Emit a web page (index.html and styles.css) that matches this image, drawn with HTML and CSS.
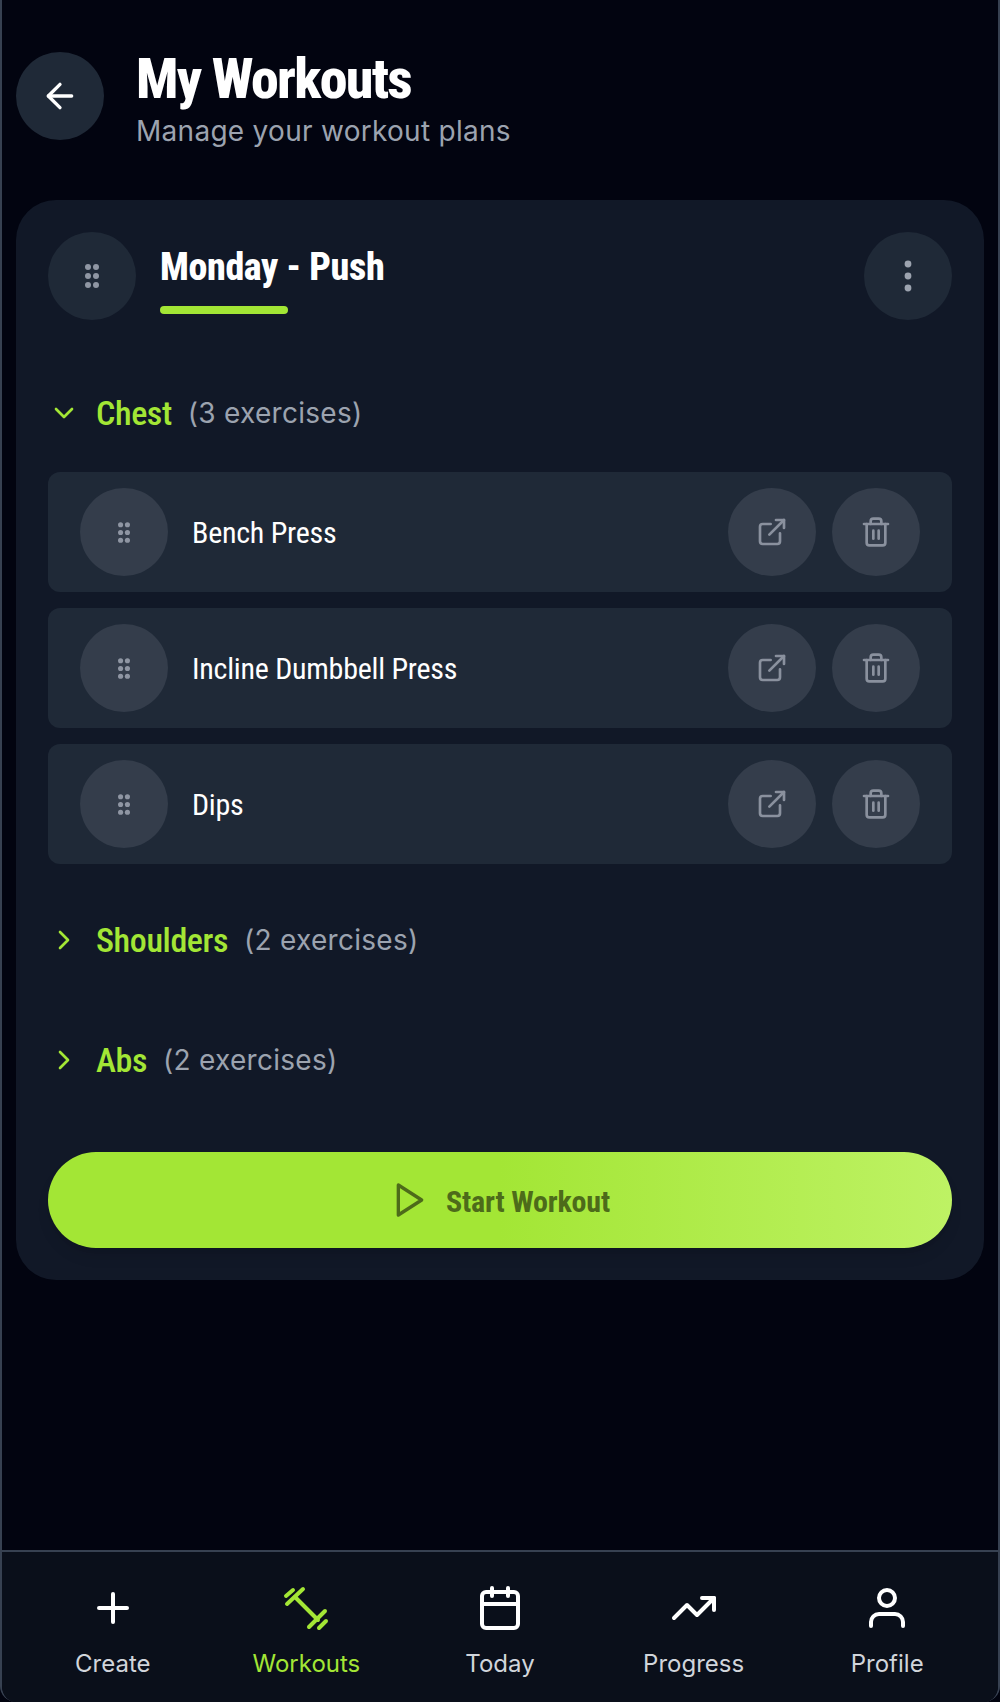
FILE: index.html
```html
<!DOCTYPE html>
<html lang="en">
<head>
  <meta charset="UTF-8">
  <meta name="viewport" content="width=device-width, initial-scale=1.0">
  <title>My Workouts</title>
  <link rel="stylesheet" href="styles.css">
</head>
<body>
  <div class="phone">
    <main class="content">
      <header class="page-head">
        <button class="circle circle-dark back-btn">
          <svg class="icon icon-lg" viewBox="0 0 24 24"><path d="M19 12H5"/><path d="m12 19-7-7 7-7"/></svg>
        </button>
        <div class="page-title">
          <h1>My Workouts</h1>
          <p class="subtitle">Manage your workout plans</p>
        </div>
      </header>

      <section class="card">
        <div class="card-head">
          <div class="circle circle-dark">
            <svg class="grip" viewBox="0 0 14 24"><circle cx="3" cy="3" r="3"/><circle cx="11" cy="3" r="3"/><circle cx="3" cy="12" r="3"/><circle cx="11" cy="12" r="3"/><circle cx="3" cy="21" r="3"/><circle cx="11" cy="21" r="3"/></svg>
          </div>
          <div class="plan-title">
            <h2>Monday - Push</h2>
            <div class="underline"></div>
          </div>
          <button class="circle circle-dark">
            <svg class="dots" viewBox="0 0 8 32"><circle cx="4" cy="4" r="3.4"/><circle cx="4" cy="16" r="3.4"/><circle cx="4" cy="28" r="3.4"/></svg>
          </button>
        </div>

        <div class="group group-open">
          <svg class="chevron" viewBox="0 0 24 24"><path d="m6 9 6 6 6-6"/></svg>
          <span class="group-name">Chest</span>
          <span class="group-count">(3 exercises)</span>
        </div>

        <div class="exercise-list">
          <div class="exercise">
            <div class="circle circle-light">
              <svg class="grip grip-sm" viewBox="0 0 14 24"><circle cx="3" cy="3" r="3"/><circle cx="11" cy="3" r="3"/><circle cx="3" cy="12" r="3"/><circle cx="11" cy="12" r="3"/><circle cx="3" cy="21" r="3"/><circle cx="11" cy="21" r="3"/></svg>
            </div>
            <span class="exercise-name">Bench Press</span>
            <button class="circle circle-light">
              <svg class="icon icon-muted" viewBox="0 0 24 24"><path d="M15 3h6v6"/><path d="M10 14 21 3"/><path d="M18 13v6a2 2 0 0 1-2 2H5a2 2 0 0 1-2-2V8a2 2 0 0 1 2-2h6"/></svg>
            </button>
            <button class="circle circle-light">
              <svg class="icon icon-muted" viewBox="0 0 24 24"><path d="M3 6h18"/><path d="M19 6v14a2 2 0 0 1-2 2H7a2 2 0 0 1-2-2V6"/><path d="M8 6V4a2 2 0 0 1 2-2h4a2 2 0 0 1 2 2v2"/><path d="M10 11v6"/><path d="M14 11v6"/></svg>
            </button>
          </div>
          <div class="exercise">
            <div class="circle circle-light">
              <svg class="grip grip-sm" viewBox="0 0 14 24"><circle cx="3" cy="3" r="3"/><circle cx="11" cy="3" r="3"/><circle cx="3" cy="12" r="3"/><circle cx="11" cy="12" r="3"/><circle cx="3" cy="21" r="3"/><circle cx="11" cy="21" r="3"/></svg>
            </div>
            <span class="exercise-name">Incline Dumbbell Press</span>
            <button class="circle circle-light">
              <svg class="icon icon-muted" viewBox="0 0 24 24"><path d="M15 3h6v6"/><path d="M10 14 21 3"/><path d="M18 13v6a2 2 0 0 1-2 2H5a2 2 0 0 1-2-2V8a2 2 0 0 1 2-2h6"/></svg>
            </button>
            <button class="circle circle-light">
              <svg class="icon icon-muted" viewBox="0 0 24 24"><path d="M3 6h18"/><path d="M19 6v14a2 2 0 0 1-2 2H7a2 2 0 0 1-2-2V6"/><path d="M8 6V4a2 2 0 0 1 2-2h4a2 2 0 0 1 2 2v2"/><path d="M10 11v6"/><path d="M14 11v6"/></svg>
            </button>
          </div>
          <div class="exercise">
            <div class="circle circle-light">
              <svg class="grip grip-sm" viewBox="0 0 14 24"><circle cx="3" cy="3" r="3"/><circle cx="11" cy="3" r="3"/><circle cx="3" cy="12" r="3"/><circle cx="11" cy="12" r="3"/><circle cx="3" cy="21" r="3"/><circle cx="11" cy="21" r="3"/></svg>
            </div>
            <span class="exercise-name">Dips</span>
            <button class="circle circle-light">
              <svg class="icon icon-muted" viewBox="0 0 24 24"><path d="M15 3h6v6"/><path d="M10 14 21 3"/><path d="M18 13v6a2 2 0 0 1-2 2H5a2 2 0 0 1-2-2V8a2 2 0 0 1 2-2h6"/></svg>
            </button>
            <button class="circle circle-light">
              <svg class="icon icon-muted" viewBox="0 0 24 24"><path d="M3 6h18"/><path d="M19 6v14a2 2 0 0 1-2 2H7a2 2 0 0 1-2-2V6"/><path d="M8 6V4a2 2 0 0 1 2-2h4a2 2 0 0 1 2 2v2"/><path d="M10 11v6"/><path d="M14 11v6"/></svg>
            </button>
          </div>
        </div>

        <div class="group">
          <svg class="chevron" viewBox="0 0 24 24"><path d="m9 18 6-6-6-6"/></svg>
          <span class="group-name">Shoulders</span>
          <span class="group-count">(2 exercises)</span>
        </div>
        <div class="group">
          <svg class="chevron" viewBox="0 0 24 24"><path d="m9 18 6-6-6-6"/></svg>
          <span class="group-name">Abs</span>
          <span class="group-count">(2 exercises)</span>
        </div>

        <button class="start-btn">
          <svg class="play" viewBox="0 0 24 24"><path d="M5 3 19 12 5 21Z"/></svg>
          <span class="start-label">Start Workout</span>
        </button>
      </section>
    </main>

    <nav class="bottom-nav">
      <div class="nav-item">
        <svg class="icon nav-icon" viewBox="0 0 24 24"><path d="M5 12h14"/><path d="M12 5v14"/></svg>
        <span>Create</span>
      </div>
      <div class="nav-item nav-active">
        <svg class="icon nav-icon" viewBox="0 0 24 24"><path d="M2 6 5.5 3"/><path d="M2.5 10 10.5 2.5"/><path d="M6.5 6.5 18 18"/><path d="M13.5 21.5 21.5 13.5"/><path d="M18.5 22 22 18.5"/></svg>
        <span>Workouts</span>
      </div>
      <div class="nav-item">
        <svg class="icon nav-icon" viewBox="0 0 24 24"><path d="M8 2v4"/><path d="M16 2v4"/><rect x="3" y="4" width="18" height="18" rx="2"/><path d="M3 10h18"/></svg>
        <span>Today</span>
      </div>
      <div class="nav-item">
        <svg class="icon nav-icon" viewBox="0 0 24 24"><path d="m22 7-8.5 8.5-5-5L2 17"/><path d="M16 7h6v6"/></svg>
        <span>Progress</span>
      </div>
      <div class="nav-item">
        <svg class="icon nav-icon" viewBox="0 0 24 24"><circle cx="12" cy="7" r="4"/><path d="M4 21v-2a4 4 0 0 1 4-4h8a4 4 0 0 1 4 4v2"/></svg>
        <span>Profile</span>
      </div>
    </nav>
  </div>
</body>
</html>
```

FILE: styles.css
```css
* {
  box-sizing: border-box;
}
body {
  margin: 0;
  background-color: #020410;
  font-family: Inter, "Noto Sans", sans-serif;
  color: #fff;
}
button {
  border: none;
  padding: 0;
  font: inherit;
}
h1, h2, p {
  margin: 0;
}
.phone {
  height: 1702px;
  display: flex;
  flex-direction: column;
  border: 2px solid #374151;
  border-top: none;
  border-bottom: none;
  border-radius: 0 0 16px 16px;
  overflow: hidden;
}
.content {
  flex: 1;
  padding: 48px 14px 0;
}
.page-head {
  display: flex;
  align-items: flex-start;
  gap: 32px;
  margin-bottom: 51px;
}
.page-title {
  padding-top: 3px;
}
h1 {
  font-family: Roboto, sans-serif;
  font-stretch: condensed;
  font-size: 56px;
  line-height: 56px;
  font-weight: 800;
  letter-spacing: -1.7px;
}
.subtitle {
  margin-top: 6px;
  font-size: 28px;
  line-height: 36px;
  color: #9ca3af;
  letter-spacing: 0.28px;
}
.circle {
  width: 88px;
  height: 88px;
  flex-shrink: 0;
  border-radius: 50%;
  display: flex;
  align-items: center;
  justify-content: center;
}
.circle-dark {
  background-color: #1f2937;
}
.circle-light {
  background-color: #343d4b;
}
.back-btn {
  margin-top: 4px;
}
.icon {
  width: 32px;
  height: 32px;
  fill: none;
  stroke: #fff;
  stroke-width: 2;
  stroke-linecap: round;
  stroke-linejoin: round;
}
.icon-lg {
  width: 40px;
  height: 40px;
}
.icon-muted {
  stroke: #8a919e;
}
.grip {
  width: 14px;
  height: 24px;
  fill: #8f96a3;
}
.grip-sm {
  width: 12px;
  height: 21px;
}
.dots {
  width: 8px;
  height: 32px;
  fill: #9ca3af;
}
.card {
  background-color: #111827;
  border-radius: 40px;
  padding: 32px;
  height: 1080px;
}
.card-head {
  display: flex;
  align-items: flex-start;
  gap: 24px;
  margin-bottom: 73px;
}
.plan-title {
  flex: 1;
}
h2 {
  font-family: Roboto, sans-serif;
  font-stretch: condensed;
  font-size: 38px;
  line-height: 42px;
  font-weight: 800;
  letter-spacing: -0.35px;
  margin-top: 14px;
}
.underline {
  width: 128px;
  height: 8px;
  border-radius: 4px;
  background-color: #a3e635;
  margin-top: 18px;
}
.group {
  display: flex;
  align-items: center;
  height: 40px;
  gap: 16px;
  margin-bottom: 80px;
}
.group-open {
  margin-bottom: 39px;
}
.chevron {
  width: 32px;
  height: 32px;
  fill: none;
  stroke: #a3e635;
  stroke-width: 2;
  stroke-linecap: round;
  stroke-linejoin: round;
}
.group-name {
  font-family: Roboto, sans-serif;
  font-stretch: condensed;
  font-size: 34px;
  font-weight: 500;
  letter-spacing: -0.4px;
  color: #a3e635;
}
.group-count {
  font-size: 28px;
  letter-spacing: 0.28px;
  color: #9ca3af;
}
.exercise-list {
  display: flex;
  flex-direction: column;
  gap: 16px;
  margin-bottom: 56px;
}
.exercise {
  height: 120px;
  padding: 0 32px;
  display: flex;
  align-items: center;
  gap: 16px;
  background-color: #1f2937;
  border-radius: 12px;
}
.exercise-name {
  flex: 1;
  margin-left: 8px;
  font-family: Roboto, sans-serif;
  font-stretch: condensed;
  font-size: 30px;
  font-weight: 400;
  letter-spacing: -0.25px;
}
.start-btn {
  width: 100%;
  height: 96px;
  margin-top: -8px;
  border-radius: 48px;
  display: flex;
  align-items: center;
  justify-content: center;
  gap: 16px;
  background: linear-gradient(to right, #a3e635 50%, #bef264 100%);
  box-shadow: 0 10px 15px -3px rgba(0, 0, 0, 0.1), 0 4px 6px -4px rgba(0, 0, 0, 0.1);
  color: #4d6b1a;
  font-family: Roboto, sans-serif;
  font-stretch: condensed;
  font-size: 30px;
  font-weight: 700;
  letter-spacing: -0.2px;
}
.start-label {
  padding-top: 2px;
}
.play {
  width: 40px;
  height: 40px;
  fill: none;
  stroke: #4d6b1a;
  stroke-width: 2;
  stroke-linejoin: round;
}
.bottom-nav {
  height: 152px;
  display: grid;
  grid-template-columns: repeat(5, 1fr);
  padding: 0 14px;
  background-color: #0a0f1a;
  border-top: 2px solid #374151;
}
.nav-item {
  display: flex;
  flex-direction: column;
  align-items: center;
  gap: 16px;
  padding-top: 32px;
  font-size: 24px;
  line-height: 32px;
  color: #d1d5db;
}
.nav-icon {
  width: 48px;
  height: 48px;
}
.nav-active {
  color: #a3e635;
}
.nav-active .icon {
  stroke: #a3e635;
}
```
